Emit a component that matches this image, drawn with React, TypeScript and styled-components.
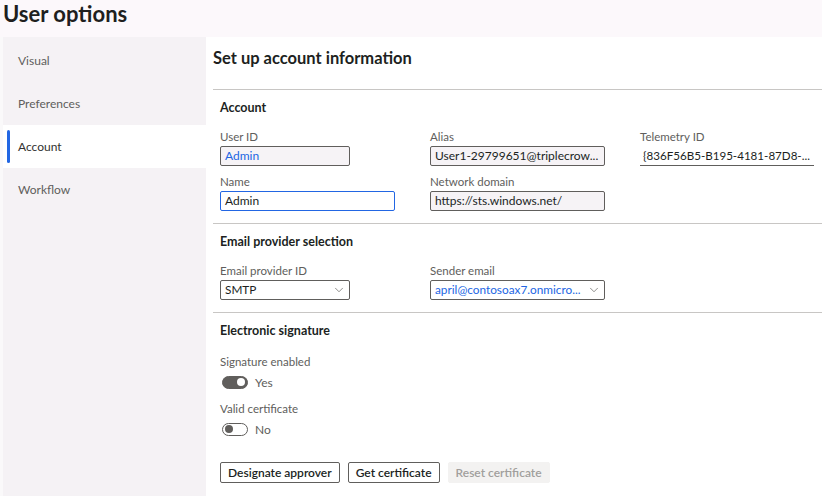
import { createGlobalStyle } from "styled-components";
import styled from "styled-components";
import { ChevronDown } from "lucide-react";

const GlobalStyle = createGlobalStyle`
  html, body {
    margin: 0;
    padding: 0;
    background: #fcf8fb;
    font-family: "Segoe UI", Lato, "Open Sans", sans-serif;
    color: #323130;
  }
`;

const navItems = ["Visual", "Preferences", "Account", "Workflow"];

const App = () => {
  return (
    <>
      <GlobalStyle />
      <Page>
        <Header>User options</Header>
        <Body>
          <Sidebar>
            {navItems.map((item) => (
              <NavItem key={item} $active={item === "Account"}>
                {item}
              </NavItem>
            ))}
          </Sidebar>
          <Content>
            <Title>Set up account information</Title>

            <Section>
              <SectionTitle>Account</SectionTitle>
              <FieldGrid>
                <Field>
                  <Label>User ID</Label>
                  <Input $w={130} $readonly $link>Admin</Input>
                </Field>
                <Field>
                  <Label>Alias</Label>
                  <Input $w={175} $readonly>User1-29799651@triplecrow...</Input>
                </Field>
                <Field>
                  <Label>Telemetry ID</Label>
                  <UnderlineInput>{"{836F56B5-B195-4181-87D8-..."}</UnderlineInput>
                </Field>
                <Field>
                  <Label>Name</Label>
                  <Input $w={175} $focused>Admin</Input>
                </Field>
                <Field>
                  <Label>Network domain</Label>
                  <Input $w={175} $readonly>https://sts.windows.net/</Input>
                </Field>
              </FieldGrid>
            </Section>

            <Section>
              <SectionTitle>Email provider selection</SectionTitle>
              <FieldGrid>
                <Field>
                  <Label>Email provider ID</Label>
                  <Select $w={130}>
                    <SelectValue>SMTP</SelectValue>
                    <ChevronDown size={14} strokeWidth={1.2} color="#605e5c" />
                  </Select>
                </Field>
                <Field>
                  <Label>Sender email</Label>
                  <Select $w={175}>
                    <SelectValue $link>april@contosoax7.onmicro...</SelectValue>
                    <ChevronDown size={14} strokeWidth={1.2} color="#605e5c" />
                  </Select>
                </Field>
              </FieldGrid>
            </Section>

            <Section>
              <SectionTitle>Electronic signature</SectionTitle>
              <ToggleGroup>
                <ToggleField>
                  <Label>Signature enabled</Label>
                  <ToggleRow>
                    <Toggle $on />
                    <ToggleText>Yes</ToggleText>
                  </ToggleRow>
                </ToggleField>
                <ToggleField>
                  <Label>Valid certificate</Label>
                  <ToggleRow>
                    <Toggle />
                    <ToggleText>No</ToggleText>
                  </ToggleRow>
                </ToggleField>
              </ToggleGroup>
              <ButtonRow>
                <Button>Designate approver</Button>
                <Button>Get certificate</Button>
                <Button disabled>Reset certificate</Button>
              </ButtonRow>
            </Section>
          </Content>
        </Body>
      </Page>
    </>
  );
};

export default App;

const Page = styled.div`
  width: 822px;
  height: 496px;
  display: flex;
  flex-direction: column;
  overflow: hidden;
`;

const Header = styled.h1`
  flex-shrink: 0;
  margin: 0;
  height: 37px;
  padding-left: 3px;
  font-size: 22px;
  font-weight: 700;
  line-height: 28px;
  color: #201f1e;
  box-sizing: border-box;
`;

const Body = styled.div`
  flex: 1;
  min-height: 0;
  display: flex;
  padding-left: 3px;
  background: #faf9fa;
`;

const Sidebar = styled.nav`
  width: 203px;
  background: #f5f2f5;
  padding-top: 2px;
`;

const NavItem = styled.div<{ $active?: boolean }>`
  position: relative;
  height: 43px;
  display: flex;
  align-items: center;
  padding-left: 15px;
  font-size: 12px;
  color: ${(p) => (p.$active ? "#323130" : "#605e5c")};
  background: ${(p) => (p.$active ? "#ffffff" : "transparent")};

  &::before {
    content: "";
    display: ${(p) => (p.$active ? "block" : "none")};
    position: absolute;
    left: 4px;
    top: 5px;
    bottom: 5px;
    width: 3px;
    border-radius: 2px;
    background: #2266e3;
  }
`;

const Content = styled.main`
  flex: 1;
  background: #ffffff;
  padding: 9px 0 0 7px;
`;

const Title = styled.h2`
  margin: 0 0 19px;
  font-size: 16.5px;
  font-weight: 700;
  line-height: 24px;
  color: #201f1e;
`;

const Section = styled.section`
  border-top: 1px solid #c8c6c4;
  padding: 9px 0 12px 7px;
`;

const SectionTitle = styled.h3`
  margin: 0 0 12px;
  font-size: 12.5px;
  font-weight: 700;
  line-height: 18px;
  color: #201f1e;
`;

const FieldGrid = styled.div`
  display: grid;
  grid-template-columns: 210px 210px 180px;
  row-gap: 8px;
`;

const Field = styled.div`
  display: flex;
  flex-direction: column;
`;

const Label = styled.label`
  font-size: 11.5px;
  line-height: 16px;
  color: #605e5c;
  margin-bottom: 1px;
`;

const Input = styled.div<{ $w: number; $readonly?: boolean; $focused?: boolean; $link?: boolean }>`
  box-sizing: border-box;
  width: ${(p) => p.$w}px;
  height: 20px;
  padding: 0 4px;
  font-size: 12px;
  line-height: 18px;
  white-space: nowrap;
  overflow: hidden;
  border-radius: 2px;
  border: 1px solid ${(p) => (p.$focused ? "#2266e3" : "#605e5c")};
  background: ${(p) => (p.$readonly ? "#f6f3f6" : "#ffffff")};
  color: ${(p) => (p.$link ? "#2266e3" : "#201f1e")};
`;

const UnderlineInput = styled.div`
  box-sizing: border-box;
  width: 174px;
  height: 20px;
  padding: 0 3px;
  font-size: 11.6px;
  line-height: 19px;
  white-space: nowrap;
  overflow: hidden;
  border-bottom: 1px solid #605e5c;
  color: #201f1e;
`;

const Select = styled.div<{ $w: number }>`
  box-sizing: border-box;
  width: ${(p) => p.$w}px;
  height: 20px;
  padding: 0 3px 0 4px;
  display: flex;
  align-items: center;
  gap: 2px;
  border: 1px solid #605e5c;
  border-radius: 2px;
  background: #ffffff;
`;

const SelectValue = styled.span<{ $link?: boolean }>`
  flex: 1;
  min-width: 0;
  overflow: hidden;
  font-size: 11.8px;
  line-height: 18px;
  white-space: nowrap;
  color: ${(p) => (p.$link ? "#2266e3" : "#201f1e")};
`;

const ToggleGroup = styled.div`
  display: flex;
  flex-direction: column;
  gap: 10px;
  padding-top: 2px;
`;

const ToggleField = styled.div`
  display: flex;
  flex-direction: column;
`;

const ToggleRow = styled.div`
  display: flex;
  align-items: center;
  gap: 7px;
  height: 18px;
  padding-left: 2px;
  margin-top: 2px;
`;

const Toggle = styled.span<{ $on?: boolean }>`
  position: relative;
  box-sizing: border-box;
  width: 26px;
  height: 13px;
  border-radius: 7px;
  border: 1px solid #605e5c;
  background: ${(p) => (p.$on ? "#605e5c" : "#ffffff")};

  &::after {
    content: "";
    position: absolute;
    top: 1.5px;
    left: ${(p) => (p.$on ? "13.5px" : "2px")};
    width: 8px;
    height: 8px;
    border-radius: 50%;
    background: ${(p) => (p.$on ? "#ffffff" : "#605e5c")};
  }
`;

const ToggleText = styled.span`
  font-size: 12px;
  color: #605e5c;
`;

const ButtonRow = styled.div`
  display: flex;
  gap: 8px;
  margin-top: 24px;
`;

const Button = styled.button`
  height: 21px;
  padding: 0 7px;
  font-family: inherit;
  font-size: 12px;
  font-weight: 600;
  color: #201f1e;
  background: #ffffff;
  border: 1px solid #605e5c;
  border-radius: 2px;

  &:disabled {
    background: #f3f2f1;
    border-color: #f3f2f1;
    color: #a19f9d;
  }
`;
